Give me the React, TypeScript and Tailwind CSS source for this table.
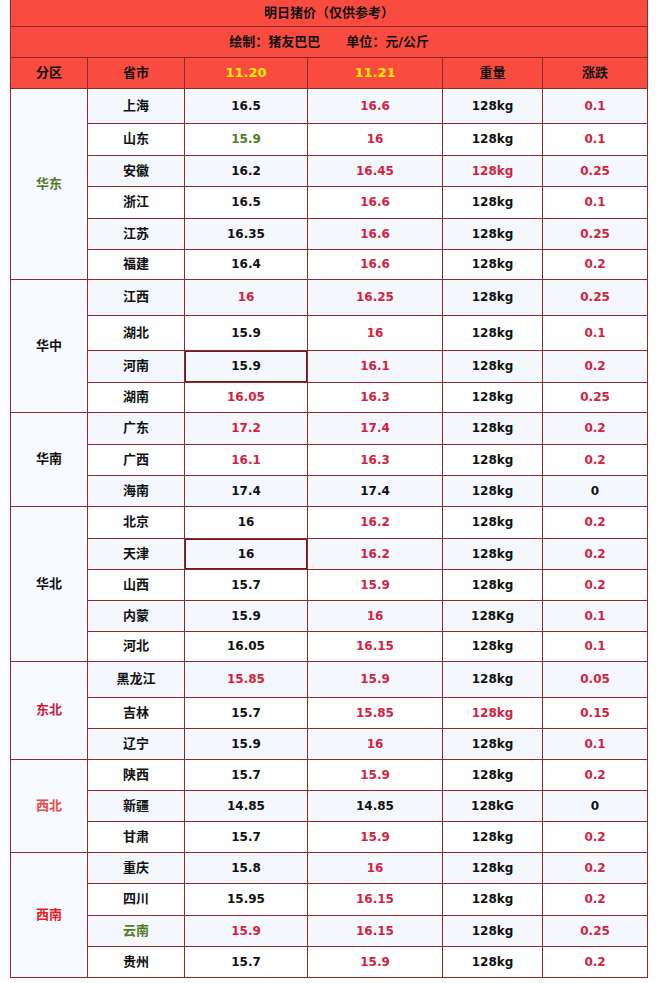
import React from 'react';

type Row = {
  name: string;
  a: string;
  b: string;
  w: string;
  d: string;
  h: number;
  // colour flags
  nameC?: string;
  aC?: string;
  bC?: string;
  wC?: string;
  dC?: string;
  boxA?: boolean;
};

type Region = { region: string; color: string; rows: Row[] };

const RED = 'text-[#d41f3f]';
const GREEN = 'text-[#4f7d1f]';
const BLACK = 'text-[#111]';

const regions: Region[] = [
  {
    region: '华东',
    color: 'text-[#4f7d1f]',
    rows: [
      { name: '上海', a: '16.5', b: '16.6', w: '128kg', d: '0.1', h: 35 },
      { name: '山东', a: '15.9', aC: GREEN, b: '16', w: '128kg', d: '0.1', h: 32 },
      { name: '安徽', a: '16.2', b: '16.45', w: '128kg', wC: RED, d: '0.25', h: 31 },
      { name: '浙江', a: '16.5', b: '16.6', w: '128kg', d: '0.1', h: 32 },
      { name: '江苏', a: '16.35', b: '16.6', w: '128kg', d: '0.25', h: 31 },
      { name: '福建', a: '16.4', b: '16.6', w: '128kg', d: '0.2', h: 30 },
    ],
  },
  {
    region: '华中',
    color: 'text-[#111]',
    rows: [
      { name: '江西', a: '16', aC: RED, b: '16.25', w: '128kg', d: '0.25', h: 36 },
      { name: '湖北', a: '15.9', b: '16', w: '128kg', d: '0.1', h: 35 },
      { name: '河南', a: '15.9', boxA: true, b: '16.1', w: '128kg', d: '0.2', h: 32 },
      { name: '湖南', a: '16.05', aC: RED, b: '16.3', w: '128kg', d: '0.25', h: 30 },
    ],
  },
  {
    region: '华南',
    color: 'text-[#111]',
    rows: [
      { name: '广东', a: '17.2', aC: RED, b: '17.4', w: '128kg', d: '0.2', h: 32 },
      { name: '广西', a: '16.1', aC: RED, b: '16.3', w: '128kg', d: '0.2', h: 31 },
      { name: '海南', a: '17.4', b: '17.4', bC: BLACK, w: '128kg', d: '0', dC: BLACK, h: 31 },
    ],
  },
  {
    region: '华北',
    color: 'text-[#111]',
    rows: [
      { name: '北京', a: '16', b: '16.2', w: '128kg', d: '0.2', h: 32 },
      { name: '天津', a: '16', boxA: true, b: '16.2', w: '128kg', d: '0.2', h: 31 },
      { name: '山西', a: '15.7', b: '15.9', w: '128kg', d: '0.2', h: 31 },
      { name: '内蒙', a: '15.9', b: '16', w: '128Kg', d: '0.1', h: 31 },
      { name: '河北', a: '16.05', b: '16.15', w: '128kg', d: '0.1', h: 30 },
    ],
  },
  {
    region: '东北',
    color: 'text-[#c62040]',
    rows: [
      { name: '黑龙江', a: '15.85', aC: RED, b: '15.9', w: '128kg', d: '0.05', h: 36 },
      { name: '吉林', a: '15.7', b: '15.85', w: '128kg', wC: RED, d: '0.15', h: 31 },
      { name: '辽宁', a: '15.9', b: '16', w: '128kg', d: '0.1', h: 31 },
    ],
  },
  {
    region: '西北',
    color: 'text-[#e84b4b]',
    rows: [
      { name: '陕西', a: '15.7', b: '15.9', w: '128kg', d: '0.2', h: 31 },
      { name: '新疆', a: '14.85', b: '14.85', bC: BLACK, w: '128kG', d: '0', dC: BLACK, h: 31 },
      { name: '甘肃', a: '15.7', b: '15.9', w: '128kg', d: '0.2', h: 31 },
    ],
  },
  {
    region: '西南',
    color: 'text-[#e81c24]',
    rows: [
      { name: '重庆', a: '15.8', b: '16', w: '128kg', d: '0.2', h: 31 },
      { name: '四川', a: '15.95', b: '16.15', w: '128kg', d: '0.2', h: 32 },
      { name: '云南', nameC: GREEN, a: '15.9', aC: RED, b: '16.15', w: '128kg', d: '0.25', h: 31 },
      { name: '贵州', a: '15.7', b: '15.9', w: '128kg', d: '0.2', h: 31 },
    ],
  },
];

const cell = 'border border-[#8c2b2b] text-center align-middle p-0';
const num = 'text-[12px]';
const zh = 'text-[13px]';

export default function App() {
  let idx = 0;
  return (
    <div className="w-[660px] min-h-[983px] bg-white pl-[10px] font-bold" style={{ fontFamily: '"DejaVu Sans", "Noto Sans CJK SC", sans-serif' }}>
      <table className="table-fixed border-collapse w-[637px] text-[#111]">
        <colgroup>
          <col className="w-[77px]" />
          <col className="w-[97px]" />
          <col className="w-[123px]" />
          <col className="w-[135px]" />
          <col className="w-[100px]" />
          <col className="w-[105px]" />
        </colgroup>
        <thead>
          <tr className="h-[26px] bg-[#fa4b40]">
            <td colSpan={6} className={`${cell} border-t-0 ${zh}`}>明日猪价（仅供参考）</td>
          </tr>
          <tr className="h-[31px] bg-[#fa4b40]">
            <td colSpan={6} className={`${cell} ${zh}`}>
              <span>绘制：猪友巴巴</span>
              <span className="ml-[26px]">单位：元/公斤</span>
            </td>
          </tr>
          <tr className="h-[31px] bg-[#fa4b40]">
            <td className={`${cell} ${zh}`}>分区</td>
            <td className={`${cell} ${zh}`}>省市</td>
            <td className={`${cell} text-[13px] text-[#ffee00]`}>11.20</td>
            <td className={`${cell} text-[13px] text-[#ffee00]`}>11.21</td>
            <td className={`${cell} ${zh}`}>重量</td>
            <td className={`${cell} ${zh}`}>涨跌</td>
          </tr>
        </thead>
        <tbody>
          {regions.map((g) =>
            g.rows.map((r, i) => {
              const bg = idx++ % 2 === 0 ? 'bg-[#f4f8fd]' : 'bg-white';
              return (
                <tr key={r.name} className={bg} style={{ height: r.h }}>
                  {i === 0 && (
                    <td rowSpan={g.rows.length} className={`${cell} ${zh} bg-[#f7fafe] ${g.color}`}>
                      {g.region}
                    </td>
                  )}
                  <td className={`${cell} ${zh} ${r.nameC ?? BLACK}`}>{r.name}</td>
                  <td className={`${cell} ${num} ${r.aC ?? BLACK} ${r.boxA ? 'shadow-[inset_0_0_0_1px_#6e1a1a]' : ''}`}>{r.a}</td>
                  <td className={`${cell} ${num} ${r.bC ?? RED}`}>{r.b}</td>
                  <td className={`${cell} ${num} ${r.wC ?? BLACK}`}>{r.w}</td>
                  <td className={`${cell} ${num} ${r.dC ?? RED}`}>{r.d}</td>
                </tr>
              );
            })
          )}
        </tbody>
      </table>
    </div>
  );
}
